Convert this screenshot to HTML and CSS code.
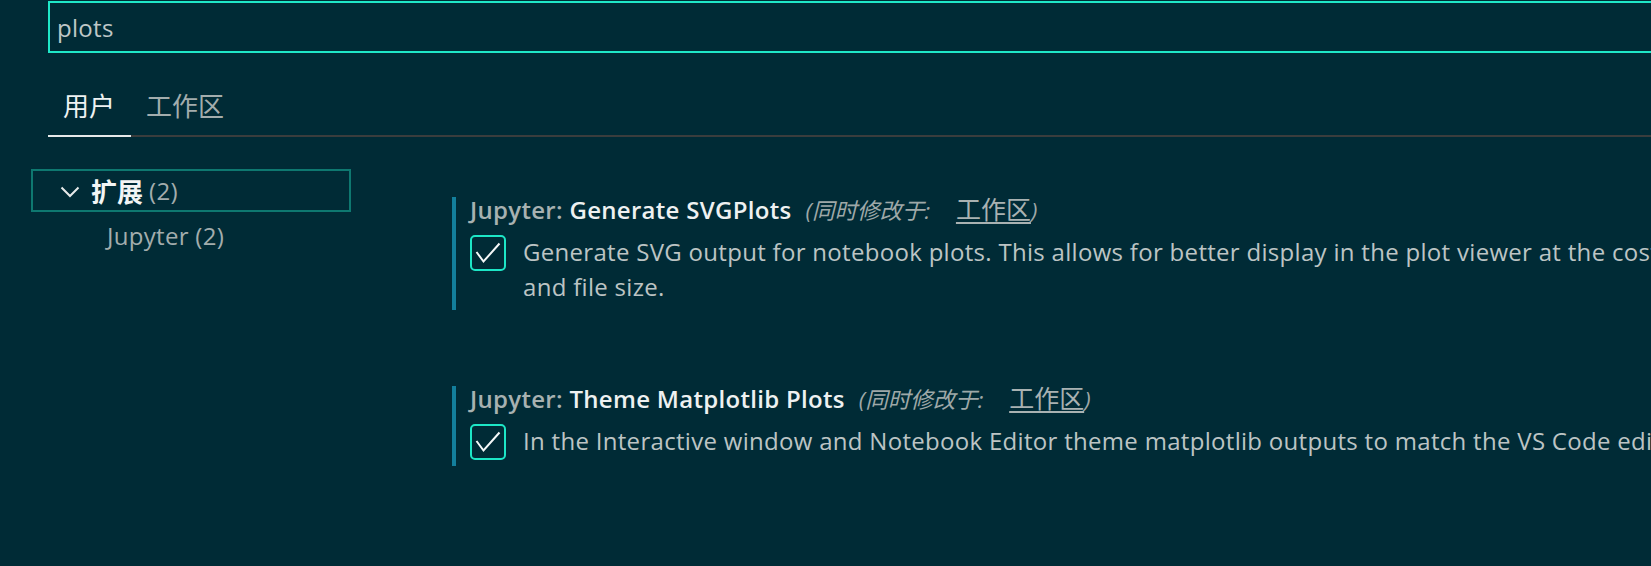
FILE: index.html
```html
<!DOCTYPE html>
<html lang="zh-CN">
<head>
<meta charset="utf-8">
<title>设置</title>
<link rel="stylesheet" href="styles.css">
</head>
<body>
<div class="settings-editor">
  <div class="search-box"><span class="search-text">plots</span></div>

  <div class="tabs">
    <div class="tab active">用户</div>
    <div class="tab">工作区</div>
  </div>

  <div class="settings-body">
    <div class="toc">
      <div class="toc-row selected">
        <svg class="chevron" width="20" height="12" viewBox="0 0 20 12"><path d="M1.5 1.5 L10 10 L18.5 1.5" fill="none" stroke="#e6eaea" stroke-width="2"/></svg>
        <span class="toc-label">扩展</span><span class="toc-count">(2)</span>
      </div>
      <div class="toc-child">Jupyter <span class="toc-count">(2)</span></div>
    </div>

    <div class="setting-list">
      <div class="setting">
        <div class="setting-title"><span class="category">Jupyter: </span><span class="label">Generate SVGPlots</span><span class="overrides">(同时修改于: <a class="link">工作区</a>)</span></div>
        <div class="setting-value">
          <span class="checkbox"><svg width="36" height="36" viewBox="0 0 36 36"><path d="M6.5 17 L13.5 26.5 L29.5 8.5" fill="none" stroke="#f4f8f8" stroke-width="2"/></svg></span>
          <div class="desc">Generate SVG output for notebook plots. This allows for better display in the plot viewer at the cost of speed and file size.</div>
        </div>
      </div>

      <div class="setting">
        <div class="setting-title"><span class="category">Jupyter: </span><span class="label">Theme Matplotlib Plots</span><span class="overrides">(同时修改于: <a class="link">工作区</a>)</span></div>
        <div class="setting-value">
          <span class="checkbox"><svg width="36" height="36" viewBox="0 0 36 36"><path d="M6.5 17 L13.5 26.5 L29.5 8.5" fill="none" stroke="#f4f8f8" stroke-width="2"/></svg></span>
          <div class="desc">In the Interactive window and Notebook Editor theme matplotlib outputs to match the VS Code editor theme.</div>
        </div>
      </div>
    </div>
  </div>
</div>
</body>
</html>
```

FILE: styles.css
```css
html, body {
  margin: 0;
  padding: 0;
  background: #002b36;
  overflow: hidden;
}

body {
  width: 1651px;
  height: 566px;
  font-family: "Open Sans", "Noto Sans CJK SC", sans-serif;
  font-size: 24px;
  letter-spacing: 0.3px;
  color: #bcc4c4;
}

.settings-editor {
  display: flex;
  flex-direction: column;
}

.search-box {
  margin: 1px -20px 0 48px;
  height: 52px;
  box-sizing: border-box;
  border: 2px solid #1fe8c8;
  padding: 3px 7px 0;
  line-height: 44px;
  color: #bfc7c7;
}

.tabs {
  display: flex;
  margin-left: 48px;
  box-shadow: inset 0 -2px 0 #3a3d3d;
}

.tab {
  font-family: "Noto Sans CJK SC", sans-serif;
  font-size: 26px;
  line-height: 26px;
  letter-spacing: 0;
  padding: 39px 16px 17px 15px;
  border-bottom: 2px solid transparent;
  color: #a3adad;
}

.tab.active {
  color: #eef2f2;
  border-bottom-color: #e6e9e9;
}

.settings-body {
  display: flex;
  align-items: flex-start;
}

.toc {
  margin: 32px 0 0 31px;
  width: 320px;
  flex: none;
}

.toc-row {
  display: flex;
  align-items: center;
  height: 43px;
  box-sizing: border-box;
  border: 2px solid #0e7870;
  padding-left: 27px;
}

.chevron {
  margin-right: 11px;
  margin-top: 2px;
}

.toc-label {
  font-family: "Noto Sans CJK SC", sans-serif;
  font-weight: 700;
  font-size: 26px;
  letter-spacing: 0;
  color: #f2f5f5;
  margin-right: 6px;
}

.toc-count {
  color: #a3adad;
}

.toc-child {
  margin-top: 4px;
  line-height: 40px;
  padding-left: 76px;
  color: #a3adad;
}

.setting-list {
  margin: 60px 0 0 101px;
  width: 1345px;
  flex: none;
}

.setting {
  border-left: 4px solid #137f9c;
  padding: 0 0 6px 14px;
  margin-bottom: 76px;
}

.setting-title {
  height: 26px;
  line-height: 26px;
  font-weight: 600;
  white-space: nowrap;
}

.category {
  color: #a7b1b1;
}

.label {
  color: #eef1f1;
}

.overrides {
  font-style: italic;
  font-weight: 400;
  font-size: 22.5px;
  line-height: 16px;
  letter-spacing: 0;
  color: #9ea8a8;
  padding-left: 14px;
}

.link {
  font-style: normal;
  font-size: 25px;
  line-height: 16px;
  text-decoration: underline;
  text-underline-offset: 3px;
  color: #a9b2b2;
  margin-left: 20px;
}

.setting-value {
  display: flex;
  align-items: flex-start;
  margin-top: 12px;
}

.checkbox {
  flex: none;
  width: 36px;
  height: 36px;
  box-sizing: border-box;
  border: 2px solid #1de6c6;
  border-radius: 5px;
  margin-right: 17px;
  display: flex;
  align-items: center;
  justify-content: center;
  overflow: hidden;
}

.checkbox svg {
  flex: none;
}

.desc {
  flex: 1;
  line-height: 35px;
  margin-top: -1px;
}
```
